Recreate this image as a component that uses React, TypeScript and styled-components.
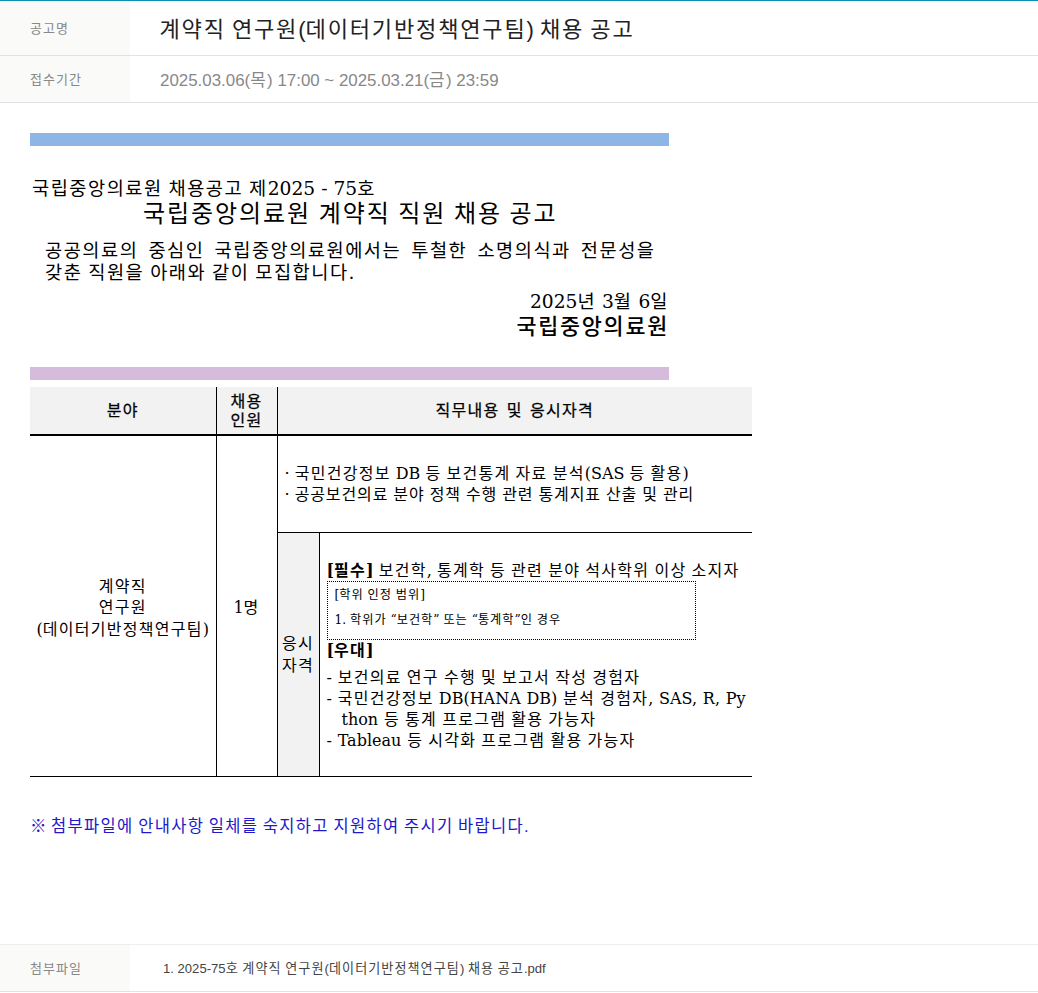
import React from 'react';
import styled, { createGlobalStyle, css } from 'styled-components';

const sans = `"Liberation Sans", "Noto Sans CJK KR", sans-serif`;
const serif = `"DejaVu Serif", "Noto Sans CJK KR", serif`;

// hangul in the reference runs at 1em per glyph, Noto is 0.92em
const hangul = css`
  letter-spacing: 0.08em;
  word-spacing: -0.08em;
`;

const GlobalStyle = createGlobalStyle`
  html, body { margin: 0; padding: 0; background: #fff; }
  body { font-family: ${sans}; color: #000; }
`;

const Page = styled.div`
  width: 1038px;
  height: 993px;
  display: flex;
  flex-direction: column;
  border-top: 1px solid #0a8fb5;
  padding-bottom: 1px;
  box-sizing: border-box;
`;

const Lat = styled.span`
  letter-spacing: 0;
  word-spacing: 0;
`;

const InfoRow = styled.div<{ $height: number; $top?: boolean }>`
  display: flex;
  height: ${({ $height }) => $height}px;
  box-sizing: border-box;
  border-bottom: 1px solid #e2e2e2;
  border-top: ${({ $top }) => ($top ? '1px solid #eee' : '0')};
  flex-shrink: 0;
`;

const InfoLabel = styled.div`
  ${hangul}
  width: 130px;
  padding: 0 0 2px 30px;
  box-sizing: border-box;
  background: #fafaf8;
  color: #888;
  font-size: 13px;
  display: flex;
  align-items: center;
`;

const Title = styled.div`
  ${hangul}
  padding: 0 0 2px 29.5px;
  font-size: 22.1px;
  color: #222;
  display: flex;
  align-items: center;
  white-space: pre;
`;

const Period = styled.div`
  ${hangul}
  padding: 0 0 2px 30px;
  font-size: 16.9px;
  color: #888;
  display: flex;
  align-items: center;
  white-space: pre;
`;

const FileName = styled.div`
  ${hangul}
  padding: 0 0 2px 33px;
  font-size: 13.1px;
  color: #444;
  display: flex;
  align-items: center;
  white-space: pre;
`;

const Content = styled.div`
  flex: 1;
  padding: 30px 30px 0;
`;

const Bar = styled.div<{ $color: string }>`
  width: 639px;
  height: 13px;
  background: ${({ $color }) => $color};
`;

const Letter = styled.div`
  width: 639px;
  height: 221px;
  padding-top: 31px;
  box-sizing: border-box;
  font-family: ${serif};
  display: flex;
  flex-direction: column;
`;

const NoticeNo = styled.div`
  ${hangul}
  font-size: 18.67px;
  line-height: 24px;
  padding-left: 2px;
`;

const LetterTitle = styled.div`
  ${hangul}
  font-size: 24px;
  line-height: 24px;
  margin-top: 1px;
  padding-left: 113px;
`;

const Lead = styled.div`
  ${hangul}
  font-size: 18.67px;
  line-height: 22px;
  margin-top: 14px;
  padding: 0 13.5px 0 15px;
  text-align: justify;
`;

const LetterDate = styled.div`
  ${hangul}
  font-size: 18.67px;
  line-height: 24px;
  margin-top: 6px;
  text-align: right;
`;

const LetterOrg = styled.div`
  ${hangul}
  font-size: 21.8px;
  font-weight: 500;
  line-height: 26px;
  text-align: right;
`;

const Gap = styled.div`
  height: 7px;
`;

const Table = styled.table`
  width: 722px;
  table-layout: fixed;
  border-collapse: collapse;
  font-family: ${serif};
  font-size: 16px;
`;

const Col = styled.col<{ $w: number }>`
  width: ${({ $w }) => $w}px;
`;

const Th = styled.th`
  letter-spacing: 0.08em;
  word-spacing: 0.1em;
  height: 47px;
  padding: 0;
  background: #f2f2f2;
  font-family: ${sans};
  font-weight: 400;
  font-size: 16px;
  line-height: 19px;
  -webkit-text-stroke: 0.25px #000;
  border-bottom: 2px solid #000;
  border-left: 1px solid #000;
  &:first-child { border-left: 0; }
`;

const Td = styled.td<{ $gray?: boolean }>`
  ${hangul}
  padding: ${({ $gray }) => ($gray ? '0' : '4px 0 0')};
  text-align: center;
  vertical-align: middle;
  border-left: 1px solid #000;
  border-bottom: 1px solid #000;
  background: ${({ $gray }) => ($gray ? '#f2f2f2' : '#fff')};
  line-height: 21.5px;
`;

const FieldCell = styled(Td)`
  border-left: 0;
`;

const Duties = styled.td`
  ${hangul}
  height: 96px;
  padding: 0 0 0 7px;
  border-left: 1px solid #000;
  border-bottom: 1px solid #000;
  line-height: 21px;
  white-space: nowrap;
`;

const TightLine = styled.span`
  letter-spacing: 0.055em;
  word-spacing: -0.055em;
`;

const Qualify = styled.td`
  ${hangul}
  height: 241px;
  padding: 2px 0 0 7px;
  border-left: 1px solid #000;
  border-bottom: 1px solid #000;
  line-height: 21px;
`;

const Bold = styled.strong`
  font-weight: 700;
`;

const Dotted = styled.div`
  ${hangul}
  width: 369px;
  height: 59px;
  box-sizing: border-box;
  border: 1px dotted #000;
  padding: 1px 0 0 7px;
  font-size: 12.2px;
  line-height: 25px;
`;

const ListLine = styled.div<{ $indent?: boolean }>`
  padding-left: ${({ $indent }) => ($indent ? 15 : 0)}px;
  white-space: nowrap;
  & > span { word-spacing: 0.7px; }
`;

const Spaced = styled.div`
  margin-bottom: 6px;
`;

const Note = styled.div`
  ${hangul}
  margin-top: 39px;
  font-size: 16.5px;
  line-height: 20px;
  color: #2318c8;
`;

export default function App() {
  return (
    <>
      <GlobalStyle />
      <Page>
        <InfoRow $height={55}>
          <InfoLabel>공고명</InfoLabel>
          <Title><span>계약직 연구원<Lat>(</Lat>데이터기반정책연구팀<Lat>)</Lat> 채용 공고</span></Title>
        </InfoRow>
        <InfoRow $height={47}>
          <InfoLabel>접수기간</InfoLabel>
          <Period><span><Lat>2025.03.06(</Lat>목<Lat>) 17:00 ~ 2025.03.21(</Lat>금<Lat>) 23:59</Lat></span></Period>
        </InfoRow>
        <Content>
          <Bar $color="#8db6e6" />
          <Letter>
            <NoticeNo>국립중앙의료원 채용공고 제<Lat>2025 - 75</Lat>호</NoticeNo>
            <LetterTitle>국립중앙의료원 계약직 직원 채용 공고</LetterTitle>
            <Lead>공공의료의 중심인 국립중앙의료원에서는 투철한 소명의식과 전문성을 갖춘 직원을 아래와 같이 모집합니다<Lat>.</Lat></Lead>
            <LetterDate><Lat>2025</Lat>년 <Lat>3</Lat>월 <Lat>6</Lat>일</LetterDate>
            <LetterOrg>국립중앙의료원</LetterOrg>
          </Letter>
          <Bar $color="#d5bcdc" />
          <Gap />
          <Table>
            <colgroup>
              <Col $w={186} />
              <Col $w={61} />
              <Col $w={42} />
              <Col $w={433} />
            </colgroup>
            <thead>
              <tr>
                <Th>분야</Th>
                <Th>채용<br />인원</Th>
                <Th colSpan={2}>직무내용 및 응시자격</Th>
              </tr>
            </thead>
            <tbody>
              <tr>
                <FieldCell rowSpan={2}>계약직<br />연구원<br /><Lat>(</Lat>데이터기반정책연구팀<Lat>)</Lat></FieldCell>
                <Td rowSpan={2}><Lat>1</Lat>명</Td>
                <Duties colSpan={2}>
                  <Lat>· </Lat>국민건강정보 <Lat>DB </Lat>등 보건통계 자료 분석<Lat>(SAS </Lat>등 활용<Lat>)</Lat><br />
                  <Lat>· </Lat><TightLine>공공보건의료 분야 정책 수행 관련 통계지표 산출 및 관리</TightLine>
                </Duties>
              </tr>
              <tr>
                <Td $gray>응시<br />자격</Td>
                <Qualify>
                  <div><Bold><Lat>[</Lat>필수<Lat>]</Lat></Bold> 보건학<Lat>,</Lat> 통계학 등 관련 분야 석사학위 이상 소지자</div>
                  <Dotted>
                    <Lat>[</Lat>학위 인정 범위<Lat>]</Lat><br />
                    <Lat>1. </Lat>학위가 <Lat>“</Lat>보건학<Lat>” </Lat>또는 <Lat>“</Lat>통계학<Lat>”</Lat>인 경우
                  </Dotted>
                  <Spaced><Bold><Lat>[</Lat>우대<Lat>]</Lat></Bold></Spaced>
                  <ListLine><Lat>- </Lat>보건의료 연구 수행 및 보고서 작성 경험자</ListLine>
                  <ListLine><Lat>- </Lat>국민건강정보 <Lat>DB(HANA DB) </Lat>분석 경험자<Lat>, SAS, R, Py</Lat></ListLine>
                  <ListLine $indent><Lat>thon </Lat>등 통계 프로그램 활용 가능자</ListLine>
                  <ListLine><Lat>- Tableau </Lat>등 시각화 프로그램 활용 가능자</ListLine>
                </Qualify>
              </tr>
            </tbody>
          </Table>
          <Note><Lat>※ </Lat>첨부파일에 안내사항 일체를 숙지하고 지원하여 주시기 바랍니다<Lat>.</Lat></Note>
        </Content>
        <InfoRow $height={48} $top>
          <InfoLabel>첨부파일</InfoLabel>
          <FileName><span><Lat>1. 2025-75</Lat>호 계약직 연구원<Lat>(</Lat>데이터기반정책연구팀<Lat>)</Lat> 채용 공고<Lat>.pdf</Lat></span></FileName>
        </InfoRow>
      </Page>
    </>
  );
}
